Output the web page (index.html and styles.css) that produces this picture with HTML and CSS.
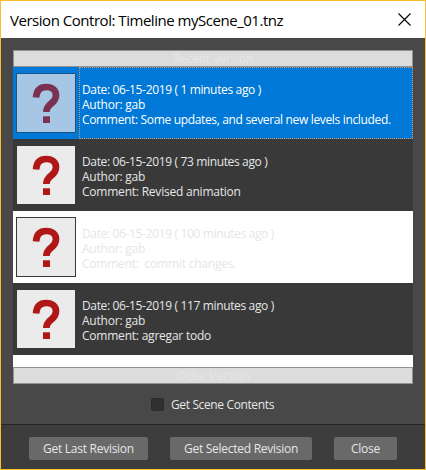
FILE: index.html
```html
<!DOCTYPE html>
<html lang="en">
<head>
<meta charset="utf-8">
<title>Version Control</title>
<link rel="stylesheet" href="styles.css">
</head>
<body>
<svg class="defs" width="0" height="0" aria-hidden="true">
  <symbol id="question" viewBox="0 0 58 58">
    <path d="M19 23.5C19.5 16.5 23 13 29.3 13C35.3 13 39 16.3 39 21.4C39 30.5 29.4 28.5 29.4 38" fill="none" stroke="currentColor" stroke-width="6.7"/>
    <path d="M26 42.3h7v6.7h-7z" fill="currentColor"/>
  </symbol>
</svg>
<div class="window">
  <header class="titlebar">
    <h1 class="title">Version Control: Timeline myScene_01.tnz</h1>
    <svg class="close" width="13" height="13" viewBox="0 0 13 13"><path d="M.5 .5l12 12M12.5 .5l-12 12" fill="none" stroke="#000" stroke-width="1.1"/></svg>
  </header>
  <main class="content">
    <div class="bar">Recent Version</div>
    <div class="list">
      <div class="row selected">
        <div class="thumb"><svg width="58" height="58"><use href="#question"/></svg></div>
        <div class="info"><p class="date">Date: 06-15-2019 ( 1 minutes ago )</p><p>Author: gab</p><p class="long">Comment: Some updates, and several new levels included.</p></div>
      </div>
      <div class="row">
        <div class="thumb"><svg width="58" height="58"><use href="#question"/></svg></div>
        <div class="info"><p class="date">Date: 06-15-2019 ( 73 minutes ago )</p><p>Author: gab</p><p>Comment: Revised animation</p></div>
      </div>
      <div class="row light">
        <div class="thumb"><svg width="58" height="58"><use href="#question"/></svg></div>
        <div class="info"><p class="date">Date: 06-15-2019 ( 100 minutes ago )</p><p>Author: gab</p><p>Comment:&nbsp; commit changes.</p></div>
      </div>
      <div class="row">
        <div class="thumb"><svg width="58" height="58"><use href="#question"/></svg></div>
        <div class="info"><p class="date">Date: 06-15-2019 ( 117 minutes ago )</p><p>Author: gab</p><p>Comment: agregar todo</p></div>
      </div>
    </div>
    <div class="bar">Older Version</div>
    <label class="option"><span class="checkbox"></span>Get Scene Contents</label>
  </main>
  <footer class="footer">
    <button class="button last">Get Last Revision</button>
    <button class="button chosen">Get Selected Revision</button>
    <button class="button dismiss">Close</button>
  </footer>
</div>
</body>
</html>
```
FILE: styles.css
```css
* { box-sizing: border-box; }
body {
  margin: 0;
  font: 12px/15px "Open Sans", "Noto Sans", sans-serif;
  letter-spacing: -0.22px;
  color: #e6e6e6;
}
.defs { position: absolute; }
.window {
  display: flex;
  flex-direction: column;
  width: 426px;
  height: 470px;
  border: 1px solid #fabd2d;
  background: #484848;
}
.titlebar {
  display: flex;
  align-items: center;
  justify-content: space-between;
  height: 37px;
  padding: 0 14px 0 9px;
  background: #fff;
  color: #000;
}
.title {
  margin: 0;
  font-size: 15px;
  font-weight: 400;
  line-height: 20px;
  letter-spacing: -0.47px;
  white-space: nowrap;
}
.content { height: 386px; padding: 12px 12px 0; }
.bar {
  height: 17px;
  border: 1px solid #929292;
  background: #dcdcdc;
  color: #e6e6e6;
  text-align: center;
}
.list { height: 300px; background: #fff; }
.row {
  display: flex;
  height: 72px;
  padding-left: 3px;
  background: #393939;
}
.row.light { background: #fff; }
.row.selected { background: #0078d7; color: #fff; }
.thumb {
  width: 60px;
  height: 60px;
  margin-top: 6px;
  border: 1px solid #393939;
  background: #ebebeb;
  color: #b01717;
}
.thumb svg { display: block; }
.selected .thumb {
  border-color: #1c5585;
  background: #a5c7e5;
  color: #7b3251;
}
.info {
  width: 334px;
  margin-left: 3px;
  padding: 14px 0 0 2px;
  border: 1px solid transparent;
}
.selected .info { border: 1px dotted #ed9149; }
.info p { margin: 0; white-space: nowrap; }
.info .date { letter-spacing: -0.35px; }
.info .long { letter-spacing: -0.34px; }
.option {
  display: flex;
  align-items: center;
  gap: 7px;
  height: 13px;
  margin: 14px 0 0 138px;
  letter-spacing: -0.37px;
}
.checkbox {
  width: 13px;
  height: 13px;
  border: 1px solid #2b2b2b;
  border-radius: 2px;
  background: #303030;
}
.footer {
  display: flex;
  gap: 22px;
  height: 45px;
  padding: 12px 28px 0;
  border-top: 1px solid #252525;
  background: #3d3d3d;
}
.button {
  height: 23px;
  padding: 0;
  border: 0;
  border-radius: 2px;
  background: #696969;
  color: #e6e6e6;
  font: inherit;
  letter-spacing: -0.27px;
}
.last { width: 119px; }
.chosen { width: 142px; }
.dismiss { width: 63px; }
```
